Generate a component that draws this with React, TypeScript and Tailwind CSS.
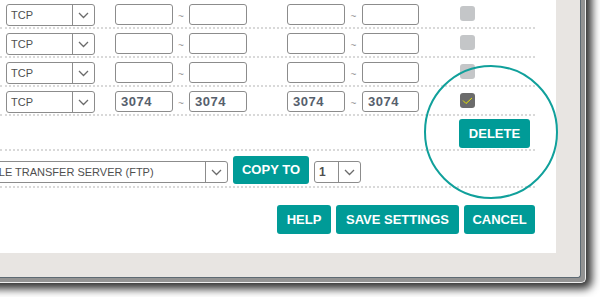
import React from "react";

type PortRow = {
  protocol: string;
  from1: string;
  to1: string;
  from2: string;
  to2: string;
  checked: boolean;
};

const rows: PortRow[] = [
  { protocol: "TCP", from1: "", to1: "", from2: "", to2: "", checked: false },
  { protocol: "TCP", from1: "", to1: "", from2: "", to2: "", checked: false },
  { protocol: "TCP", from1: "", to1: "", from2: "", to2: "", checked: false },
  { protocol: "TCP", from1: "3074", to1: "3074", from2: "3074", to2: "3074", checked: true },
];

function Chevron() {
  return (
    <svg width="11" height="7" viewBox="0 0 11 7" fill="none">
      <polyline points="1,1 5.5,5.5 10,1" stroke="#6b6b6b" strokeWidth="1.3" />
    </svg>
  );
}

// Select box with text part and chevron part
function SelectBox({
  value,
  width,
  chevronWidth = 22,
  bold = false,
  className = "",
}: {
  value: string;
  width: string;
  chevronWidth?: number;
  bold?: boolean;
  className?: string;
}) {
  return (
    <div
      className={`flex h-[22px] shrink-0 rounded-[3px] border border-[#8c8c8c] bg-white ${width} ${className}`}
    >
      <div
        className={`flex flex-1 items-center overflow-hidden whitespace-nowrap pl-[4px] text-[#4f4f4f] ${
          bold ? "text-[12px] font-bold" : "text-[11px]"
        }`}
      >
        {value}
      </div>
      <div
        className="flex items-center justify-center border-l border-[#8c8c8c]"
        style={{ width: chevronWidth }}
      >
        <Chevron />
      </div>
    </div>
  );
}

function PortInput({ value, width = "w-[58px]" }: { value: string; width?: string }) {
  return (
    <div
      className={`flex h-[21px] shrink-0 items-center rounded-[3px] border border-[#8c8c8c] bg-white pl-[5px] text-[13px] font-bold tracking-[0.5px] text-[#56606c] ${width}`}
    >
      {value}
    </div>
  );
}

function Tilde({ width }: { width: string }) {
  return (
    <div className={`flex h-[21px] shrink-0 items-center justify-center pt-[3px] text-[10px] text-[#999] ${width}`}>
      ~
    </div>
  );
}

function Checkbox({ checked }: { checked: boolean }) {
  if (checked) {
    return (
      <div className="ml-[41px] mt-[2px] flex h-[15px] w-[15px] shrink-0 items-center justify-center rounded-[3px] bg-[#6b6b6b]">
        <svg width="11" height="8" viewBox="0 0 11 8" fill="none">
          <polyline points="1,3.5 4,6.5 10,1" stroke="#e4e400" strokeWidth="1" />
        </svg>
      </div>
    );
  }
  return <div className="ml-[41px] mt-[2px] h-[15px] w-[15px] shrink-0 rounded-[3px] bg-[#c4c6c8]" />;
}

function TealButton({ label, width, height = "h-[29px]" }: { label: string; width: string; height?: string }) {
  return (
    <button
      className={`flex shrink-0 items-center justify-center rounded-[3px] bg-[#009b97] text-[13px] font-bold text-white ${width} ${height}`}
    >
      {label}
    </button>
  );
}

export default function App() {
  return (
    <div className="h-[297px] w-[600px] overflow-hidden bg-white font-['Liberation_Sans',Arial,sans-serif]">
      {/* window frame, extends past top/left of the crop */}
      <div className="-ml-[20px] -mt-[20px] h-[303px] w-[606px] rounded-br-[5px] border-b border-r border-[#eeeeee] bg-[#939393] shadow-[3px_3px_8px_3px_rgba(0,0,0,0.8)]">
        <div className="h-[298px] w-[601px] rounded-br-[3px] border-b border-r border-[#5d6a73] bg-[#e8e5e2]">
          <div className="relative h-[273px] w-[576px] bg-white pl-[20px] pt-[20px]">
            <div className="w-[535px]">
              {rows.map((row, i) => (
                <div
                  key={i}
                  className="flex h-[29px] items-start border-b-2 border-dotted border-[#d9d9d9] pt-[4px]"
                >
                  <SelectBox value={row.protocol} width="w-[89px]" className="ml-[6px]" />
                  <div className="ml-[20px] flex">
                    <PortInput value={row.from1} />
                    <Tilde width="w-[16px]" />
                    <PortInput value={row.to1} />
                  </div>
                  <div className="ml-[40px] flex">
                    <PortInput value={row.from2} />
                    <Tilde width="w-[17px]" />
                    <PortInput value={row.to2} width="w-[57px]" />
                  </div>
                  <Checkbox checked={row.checked} />
                </div>
              ))}

              <div className="flex h-[35px] border-b-2 border-dotted border-[#d9d9d9] pt-[3px]">
                <div className="ml-[459px]">
                  <TealButton label="DELETE" width="w-[71px]" />
                </div>
              </div>

              <div className="flex h-[37px] items-start border-b-2 border-dotted border-[#d9d9d9] pt-[5px]">
                <SelectBox
                  value="FILE TRANSFER SERVER (FTP)"
                  width="w-[244px]"
                  className="-ml-[16px] mt-[5px]"
                />
                <div className="ml-[5px]">
                  <TealButton label="COPY TO" width="w-[76px]" height="h-[28px]" />
                </div>
                <SelectBox value="1" width="w-[47px]" bold className="ml-[5px] mt-[5px]" />
              </div>

              <div className="mt-[17px] flex justify-end gap-[5px]">
                <TealButton label="HELP" width="w-[54px]" />
                <TealButton label="SAVE SETTINGS" width="w-[123px]" />
                <TealButton label="CANCEL" width="w-[71px]" />
              </div>
            </div>

            {/* highlight circle drawn over the delete area */}
            <div className="pointer-events-none absolute left-[444px] top-[85px] h-[134px] w-[134px] rounded-full border-2 border-[#10a09b]" />
          </div>
        </div>
      </div>
    </div>
  );
}
